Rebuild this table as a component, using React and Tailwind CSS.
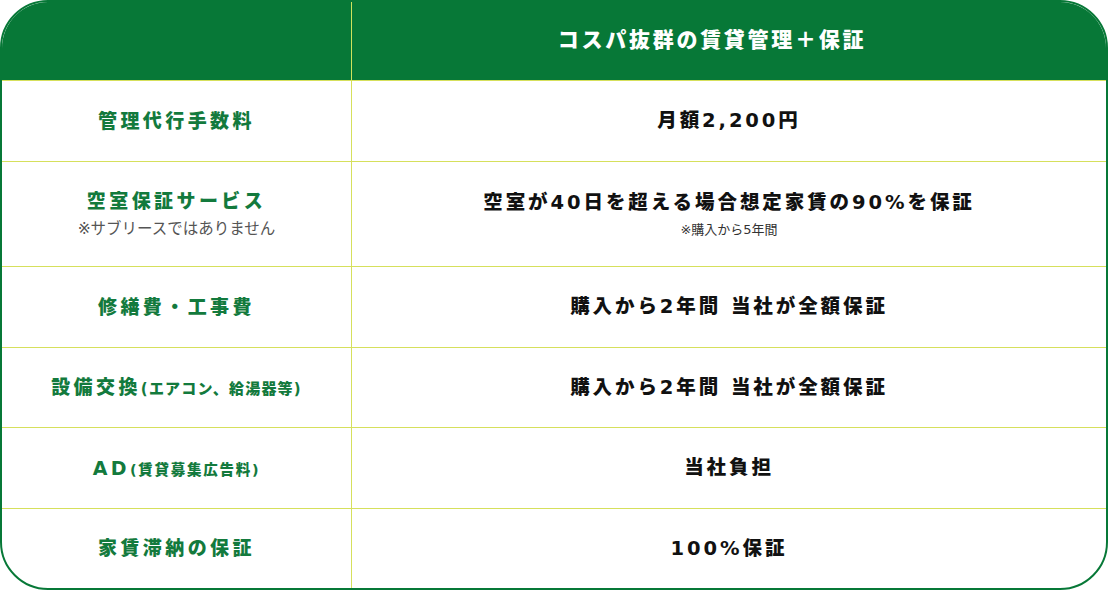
import React from "react";

const rows = [
  { h: "h-[81px]", left: <span>管理代行手数料</span>, right: <span>月額2,200円</span> },
  {
    h: "h-[105px]",
    left: (
      <div className="flex flex-col items-center">
        <span>空室保証サービス</span>
        <span className="mt-[2px] text-[15.5px] font-normal tracking-normal text-[#555]">※サブリースではありません</span>
      </div>
    ),
    right: (
      <div className="flex flex-col items-center">
        <span>空室が40日を超える場合想定家賃の90%を保証</span>
        <span className="mt-[3px] text-[13px] font-normal tracking-normal text-[#333]">※購入から5年間</span>
      </div>
    ),
  },
  { h: "h-[81px]", left: <span>修繕費・工事費</span>, right: <span>購入から2年間 当社が全額保証</span> },
  {
    h: "h-[80px]",
    left: (
      <span>
        設備交換<span className="text-[15px] tracking-[0.08em]">(エアコン、給湯器等)</span>
      </span>
    ),
    right: <span>購入から2年間 当社が全額保証</span>,
  },
  {
    h: "h-[81px]",
    left: (
      <span>
        AD<span className="text-[14.5px] tracking-[0.12em]">(賃貸募集広告料)</span>
      </span>
    ),
    right: <span>当社負担</span>,
  },
  { h: "h-[80px]", left: <span>家賃滞納の保証</span>, right: <span>100%保証</span> },
];

export default function App() {
  return (
    <div
      className="w-[1108px] h-[590px] bg-white"
      style={{ fontFamily: '"DejaVu Sans", "Noto Sans CJK JP", "Noto Sans", sans-serif' }}
    >
      <div className="w-full h-full border-2 border-[#077837] rounded-[48px] overflow-hidden flex flex-col bg-white">
        <div className="grid grid-cols-[350px_1fr] h-[78px] bg-[#077837] shrink-0">
          <div className="border-r border-[#cfe35d]" />
          <div className="flex items-center justify-center pr-[34px] text-white font-black text-[21px] tracking-[0.13em]">
            コスパ抜群の賃貸管理＋保証
          </div>
        </div>
        {rows.map((r, i) => (
          <div
            key={i}
            className={`grid grid-cols-[350px_1fr] ${r.h} shrink-0 border-t border-[#d6e05c]`}
          >
            <div className="border-r border-[#d6e05c] flex items-center justify-center text-[#137a3d] font-black text-[19px] tracking-[0.18em]">
              {r.left}
            </div>
            <div className="flex items-center justify-center text-[#111] font-black text-[19.5px] tracking-[0.15em]">
              {r.right}
            </div>
          </div>
        ))}
      </div>
    </div>
  );
}
